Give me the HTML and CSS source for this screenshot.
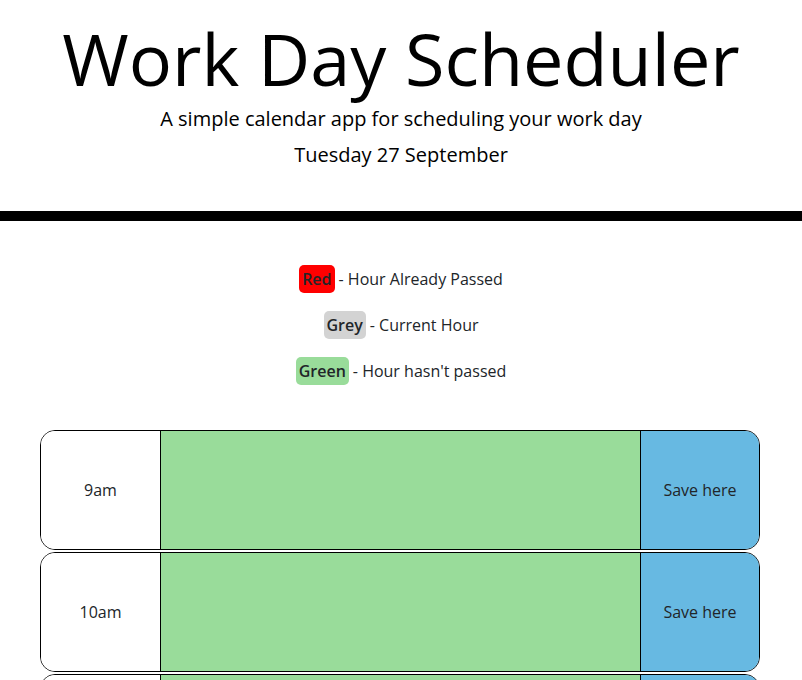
FILE: index.html
```html
<!DOCTYPE html>
<html lang="en">
<head>
<meta charset="utf-8">
<title>Work Day Scheduler</title>
<link rel="stylesheet" href="styles.css">
</head>
<body>
<header class="header">
  <h1 class="title">Work Day Scheduler</h1>
  <p class="lead">A simple calendar app for scheduling your work day</p>
  <p class="date">Tuesday 27 September</p>
</header>
<section class="legend">
  <div class="legend-line"><span class="pill pill-red">Red</span><span class="legend-text">- Hour Already Passed</span></div>
  <div class="legend-line"><span class="pill pill-grey">Grey</span><span class="legend-text">- Current Hour</span></div>
  <div class="legend-line"><span class="pill pill-green">Green</span><span class="legend-text">- Hour hasn't passed</span></div>
</section>
<main class="schedule">
  <div class="row">
    <div class="hour">9am</div>
    <textarea class="entry future"></textarea>
    <button class="save">Save here</button>
  </div>
  <div class="row">
    <div class="hour">10am</div>
    <textarea class="entry future"></textarea>
    <button class="save">Save here</button>
  </div>
  <div class="row">
    <div class="hour">11am</div>
    <textarea class="entry future"></textarea>
    <button class="save">Save here</button>
  </div>
</main>
</body>
</html>
```
FILE: styles.css
```css
* { box-sizing: border-box; }
body {
  margin: 0;
  font-family: "Open Sans", "Noto Sans", sans-serif;
  font-size: 16px;
  line-height: 1.5;
  color: #212529;
  background: #fff;
}
.header {
  text-align: center;
  padding: 15px 0 41px;
  border-bottom: 10px solid #000;
  color: #000;
}
.title {
  margin: 0 0 3px;
  font-size: 72px;
  font-weight: 400;
  line-height: 1.2;
}
.lead {
  margin: 0 0 6px;
  font-size: 20px;
  line-height: 30px;
}
.date {
  margin: 0;
  font-size: 20px;
  line-height: 30px;
}
.legend {
  display: flex;
  flex-direction: column;
  align-items: center;
  gap: 18px;
  margin: 44px 0 45px;
}
.legend-line {
  display: flex;
  align-items: center;
  gap: 4px;
  height: 28px;
}
.pill {
  padding: 2px 3px;
  border-radius: 5px;
  font-weight: 600;
  line-height: 24px;
}
.pill-red { background: #ff0000; }
.pill-grey { background: #d3d3d3; }
.pill-green { background: #99dc9a; }
.schedule {
  width: 720px;
  margin-left: 40px;
  display: flex;
  flex-direction: column;
  gap: 2px;
}
.row {
  display: flex;
  height: 120px;
  border: 1px solid #000;
  border-radius: 15px;
  overflow: hidden;
}
.hour {
  width: 120px;
  flex: none;
  display: flex;
  align-items: center;
  justify-content: center;
  border-right: 1px solid #000;
  background: #fff;
}
.entry {
  flex: 1;
  margin: 0;
  border: none;
  resize: none;
  font: inherit;
  padding: 8px;
}
.future { background: #99dc9a; }
.save {
  width: 119px;
  flex: none;
  border: none;
  border-left: 1px solid #000;
  background: #67b9e2;
  color: #212529;
  font: inherit;
  padding: 0;
}
```
